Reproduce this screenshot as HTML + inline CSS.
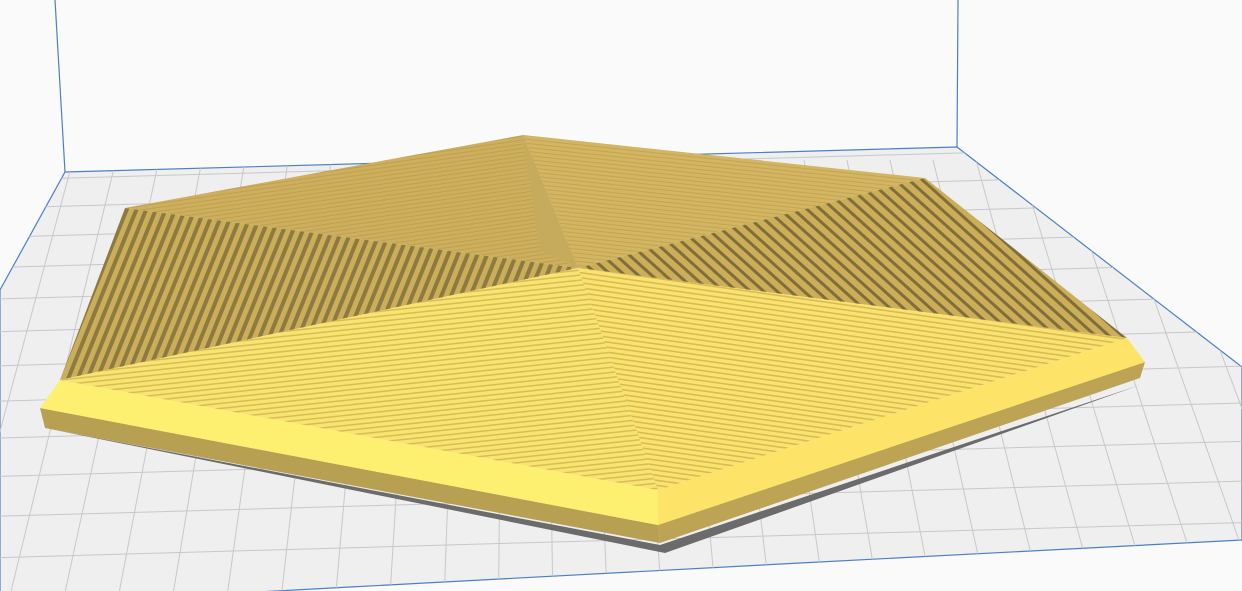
<!DOCTYPE html>
<html><head><meta charset="utf-8"><style>
html,body{margin:0;padding:0;background:#fafafa;width:1242px;height:591px;overflow:hidden}
svg{display:block}
</style></head><body>
<svg id="s" width="1242" height="591" viewBox="0 0 1242 591" xmlns="http://www.w3.org/2000/svg">
<defs>
<pattern id="hz" width="6" height="5" patternUnits="userSpaceOnUse" patternTransform="rotate(-6)">
<rect width="6" height="5" fill="#f8e470"/><rect y="3.5" width="6" height="1.5" fill="#d9bc55"/></pattern>
<pattern id="hz2" width="6" height="5" patternUnits="userSpaceOnUse" patternTransform="rotate(8)">
<rect width="6" height="5" fill="#f9e26e"/><rect y="3.5" width="6" height="1.5" fill="#d8b954"/></pattern>
<pattern id="vl" width="9" height="9" patternUnits="userSpaceOnUse" patternTransform="rotate(22)">
<rect width="9" height="9" fill="#cbae58"/><rect x="5" width="4" height="9" fill="#8d7a42"/></pattern>
<pattern id="vr" width="9" height="9" patternUnits="userSpaceOnUse" patternTransform="rotate(-48)">
<rect width="9" height="9" fill="#cbae57"/><rect x="5" width="3" height="9" fill="#7f6e3c"/></pattern>
<pattern id="bk" width="6" height="4" patternUnits="userSpaceOnUse" patternTransform="rotate(-8)">
<rect width="6" height="4" fill="#cdaf5e"/><rect y="3" width="6" height="1" fill="#bea150"/></pattern>
<pattern id="bk2" width="6" height="4" patternUnits="userSpaceOnUse" patternTransform="rotate(6)">
<rect width="6" height="4" fill="#d3b562"/><rect y="3" width="6" height="1" fill="#c2a553"/></pattern>
</defs>
<rect width="1242" height="591" fill="#fafafa"/>
<line x1="55" y1="0" x2="65" y2="172" stroke="#4a80c8" stroke-width="1.2"/>
<line x1="958" y1="0" x2="957" y2="147" stroke="#4a80c8" stroke-width="1.2"/>
<polygon points="65,172 957,147 1242,367 1242,540 800,563 350,587 0,606 0,290" fill="#efefef" stroke="#4a80c8" stroke-width="1.2"/>
<g id="grid" stroke="#c8c8c8" stroke-width="1"></g>
<polygon points="45,428 665,553 1140,385 1110,395 660,545" fill="#6b6b6b"/>
<polygon points="40,408 658,525 660,543 45,428" fill="#b8a052"/>
<polygon points="658,525 1145,362 1140,378 660,543" fill="#bda354"/>
<polygon points="60,380 658,490 658,525 40,408" fill="#fdf070"/>
<polygon points="658,490 1127,338 1145,362 658,525" fill="#fde468"/>
<polygon points="578,268 125,208 523,135" fill="url(#bk)"/>
<polygon points="578,268 523,135 925,178" fill="url(#bk2)"/>
<polygon points="523,135 578,268 540,250" fill="#c7ab5c"/>
<polygon points="578,268 125,208 60,380" fill="url(#vl)"/>
<polygon points="578,268 925,178 1127,338" fill="url(#vr)"/>
<polygon points="578,268 60,380 658,490" fill="url(#hz)"/>
<polygon points="578,268 658,490 1127,338" fill="url(#hz2)"/>
</svg>
<script>
var g=document.getElementById('grid'),ns='http://www.w3.org/2000/svg';
var vx=520,vy=-1500;
function ln(a,b,c,d){var l=document.createElementNS(ns,'line');l.setAttribute('x1',a);l.setAttribute('y1',b);l.setAttribute('x2',c);l.setAttribute('y2',d);g.appendChild(l);}
for(var x=-400;x<=1400;x+=43){var k=(600-vy)/(160-vy);ln(x,160,vx+(x-vx)*k,600);}
var y=178,s=28;while(y<620){ln(0,y+2,1242,y-33);y+=s;s*=1.04;}
var c=document.createElementNS(ns,'clipPath');c.id='cp';var p=document.createElementNS(ns,'polygon');p.setAttribute('points','65,172 957,147 1242,367 1242,540 800,563 350,587 0,606 0,290');c.appendChild(p);document.querySelector('defs').appendChild(c);g.setAttribute('clip-path','url(#cp)');
</script>
</body></html>
